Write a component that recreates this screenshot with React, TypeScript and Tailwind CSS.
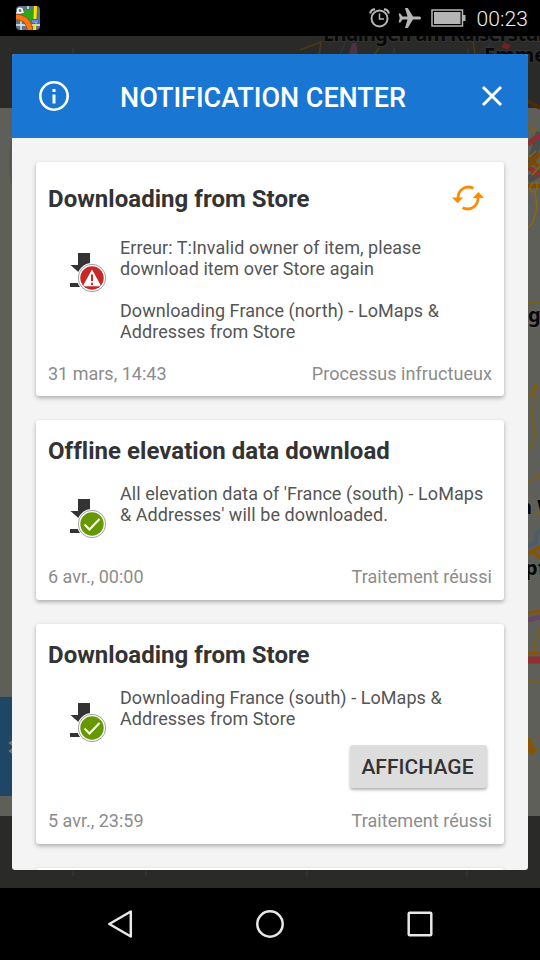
import React from 'react';
import clsx from 'clsx';

type Status = 'error' | 'done';

interface Notification {
  title: string;
  status: Status;
  paragraphs: string[][];
  date: string;
  result: string;
  retry?: boolean;
  action?: string;
  height: string;
}

const notifications: Notification[] = [
  {
    title: 'Downloading from Store',
    status: 'error',
    paragraphs: [
      ['Erreur: T:Invalid owner of item, please', 'download item over Store again'],
      ['Downloading France (north) - LoMaps &', 'Addresses from Store'],
    ],
    date: '31 mars, 14:43',
    result: 'Processus infructueux',
    retry: true,
    height: 'h-[234px]',
  },
  {
    title: 'Offline elevation data download',
    status: 'done',
    paragraphs: [["All elevation data of 'France (south) - LoMaps", "& Addresses' will be downloaded."]],
    date: '6 avr., 00:00',
    result: 'Traitement réussi',
    height: 'h-[180px]',
  },
  {
    title: 'Downloading from Store',
    status: 'done',
    paragraphs: [['Downloading France (south) - LoMaps &', 'Addresses from Store']],
    date: '5 avr., 23:59',
    result: 'Traitement réussi',
    action: 'AFFICHAGE',
    height: 'h-[220px]',
  },
];

function StatusBar() {
  return (
    <div className="h-9 shrink-0 bg-black flex items-center pl-4 pr-3">
      <svg width="24" height="24" viewBox="0 0 24 24" className="shrink-0">
        <clipPath id="app-icon">
          <rect width="24" height="24" rx="4" />
        </clipPath>
        <g clipPath="url(#app-icon)">
          <rect width="24" height="24" fill="#5d7387" />
          <path d="M5 6L10 4L18 3L19 15L16 18L12 12L6 9Z" fill="#2fa51c" />
          <path d="M0 7L8 6M0 19H24M5 12V24M12 0V3" stroke="#e6edf0" strokeWidth="1.4" />
          <path d="M19.500 0L18.500 24" stroke="#ffe100" strokeWidth="3" />
          <path d="M0 11C8 11 13 16 14 24" fill="none" stroke="#a94a08" strokeWidth="6" />
          <path d="M0 11C8 11 13 16 14 24" fill="none" stroke="#ff7413" strokeWidth="4.6" />
          <circle cx="4" cy="4.5" r="2.3" fill="#5d7387" stroke="#fff" strokeWidth="1.6" />
          <rect x="15.500" y="13" width="7" height="5" rx="1" fill="#2b62d9" />
          <path d="M17 14V17M19 14V17H21V14" stroke="#c9dcff" strokeWidth=".7" fill="none" />
        </g>
      </svg>
      <svg width="22" height="20" viewBox="0 0 22 20" className="ml-auto" fill="none" stroke="#b5b5b5">
        <circle cx="10.500" cy="10.500" r="8" strokeWidth="2" />
        <path d="M10.500 5.500V11H15" strokeWidth="1.500" />
        <path d="M1.200 5.500C1.500 3 3.500 1.200 6 1.300M19.800 5.500C19.500 3 17.500 1.200 15 1.300" strokeWidth="2.200" />
      </svg>
      <svg width="23" height="22" viewBox="0 0 23 22" className="ml-[7px]" fill="#b5b5b5">
        <path d="M23 11C23 9.900 22 9.400 21 9.400H15L9.800 1H7L9.500 9.400H4.500L2.300 6.500H.6L1.700 11L.6 15.500H2.300L4.500 12.600H9.500L7 21H9.800L15 12.600H21C22 12.600 23 12.100 23 11Z" />
      </svg>
      <svg width="35" height="18" viewBox="0 0 35 18" className="ml-[10px]">
        <rect x="1" y="1" width="30.500" height="16" fill="none" stroke="#b5b5b5" strokeWidth="1.500" />
        <rect x="3" y="3" width="26.500" height="12" fill="#b5b5b5" />
        <path d="M32 6H34.500V12H32Z" fill="#b5b5b5" />
      </svg>
      <span className="ml-[10px] pt-px text-[21px] leading-6 tracking-[0.1px] text-[#eeeeee] font-light">00:23</span>
    </div>
  );
}

function MapBackdrop() {
  return (
    <svg className="absolute inset-0" width="540" height="852" viewBox="0 36 540 852" fill="none">
      <rect y="36" width="540" height="852" fill="#2a2a28" />
      <rect y="108" width="540" height="708" fill="#5f5f59" />
      <path d="M12 140Q8 162 12 184" stroke="#555551" strokeWidth="2" />
      {/* dimmed roads behind the top toolbar */}
      <path d="M300 50L321 42L319 54M379 48L375 54M473 42L475 54" stroke="#4d3a12" strokeWidth="1.500" />
      <path d="M340 54L345 43M493 37L488 47L496 54" stroke="#29343c" strokeWidth="2" />
      <path d="M352 43L356 43L358 54H349Z" fill="#4a3348" />
      <path d="M504 42L511 45L508 50L501 47Z" fill="#6e2221" />
      <path d="M73 48V54M320 48V54M394 48V54M468 48V54M73 870V876M146 870V876M307 870V876M467 870V876" stroke="#3c3c3a" />
      <path d="M526 100L540 108" stroke="#4a2c05" strokeWidth="4" />
      {/* roads along the right edge */}
      <path d="M528 126L540 134" stroke="#80600c" strokeWidth="2" />
      <path d="M531 164L540 132M528 180L540 172" stroke="#4c4c4b" strokeWidth="8" />
      <path d="M528 145Q533 138 540 136M528 167L540 175" stroke="#8d3030" strokeWidth="5" />
      <path d="M528 167L540 153M529 157L540 169M528 186H540" stroke="#7c4b02" strokeWidth="4" />
      <path d="M529 157L536 151M532 175L540 166M533 182Q527 190 533 192Q538 191 537 182M535 192L537 207L533 222L528 228" stroke="#8c6710" strokeWidth="1.500" />
      <path d="M528 304Q533 301 540 302M528 397L533 390L535 384L540 389M535 384L534 400L532 420L535 432L533 443L528 449" stroke="#7c600b" strokeWidth="1.500" />
      <path d="M528 482L534 479L540 473M533 513H540" stroke="#7c600b" strokeWidth="1.500" />
      <path d="M528 546L535 543L536 535L540 530" stroke="#4b5c6a" strokeWidth="4" />
      <path d="M528 554L540 547M533 552L540 558" stroke="#875405" strokeWidth="3.500" />
      <path d="M528 620L540 617" stroke="#654666" strokeWidth="5" />
      <path d="M528 613L540 611M528 653H540" stroke="#875405" strokeWidth="3" />
      <path d="M535 652L534 641L538 637L538 630L540 628M528 680L540 683M534 750L540 749" stroke="#7c600b" strokeWidth="1.500" />
      <path d="M528 660H540" stroke="#8d3030" strokeWidth="7" />
      <path d="M528 738H531L534 746L536 750L532 756L528 752Z" fill="#875405" />
      <g fill="#080808" fontFamily="Noto Sans" fontWeight="700" stroke="#65655f" strokeWidth="2" paintOrder="stroke">
        <g stroke="#333331">
          <text x="323" y="41" fontSize="20" textLength="233">Endingen am Kaiserstuhl</text>
          <text x="484" y="62" fontSize="20">Emme</text>
        </g>
        <text x="528" y="322" fontSize="20">g</text>
        <text x="519" y="514" fontSize="20">n W</text>
        <text x="525" y="575" fontSize="20">pf</text>
      </g>
      <rect y="697" width="12" height="99" fill="#204666" />
      <path d="M14 740L10 743L14 746M14 748L10 751L14 754" stroke="#777" strokeWidth="2" />
    </svg>
  );
}

function StatusIcon({ status }: { status: Status }) {
  return (
    <svg width="36" height="40" viewBox="0 0 36 40" className="ml-[22px] mt-4 shrink-0">
      <path d="M8 0H20V12H24L14 24L0.500 12H8Z" fill="#333" />
      <path d="M0 30H27V34H0Z" fill="#333" />
      <circle cx="22" cy="25" r="15" fill="#fff" />
      <circle cx="22" cy="25" r="13.700" fill="#fff" stroke="#777" strokeWidth=".7" />
      <circle cx="22" cy="25" r="11.700" fill={status === 'error' ? '#c62828' : '#669900'} />
      {status === 'error' ? (
        <>
          <path d="M22 16.500L30.300 31.500V33.500H13.700V31.500Z" fill="#fff" />
          <path d="M14 33.600H30L28.500 35H15.500Z" fill="#c62828" />
          <path d="M22 21.500V28M22 29.800V32" stroke="#c62828" strokeWidth="2" />
        </>
      ) : (
        <path d="M14.500 25.500L19.500 30.500L29.500 20" fill="none" stroke="#fff" strokeWidth="2" />
      )}
    </svg>
  );
}

function RetryIcon() {
  return (
    <svg width="32" height="26" viewBox="0 0 32 26" className="mr-2" fill="none">
      <path d="M21.500 3.200C14 -.2 6 4.500 6 13M10.500 22.800C18 26.200 26 21.500 26 13" stroke="#ff8b00" strokeWidth="2.800" />
      <path d="M0 12.500H11.200L5.600 18.200ZM20.800 13H32L26.400 7Z" fill="#ff8b00" />
    </svg>
  );
}

function NotificationCard({ item }: { item: Notification }) {
  return (
    <div
      className={clsx(
        'shrink-0 flex flex-col bg-white rounded-[3px] px-3 pt-3 shadow-[0_2px_4px_rgba(0,0,0,0.3)]',
        item.retry ? 'pb-3' : 'pb-[13px]',
        item.height,
      )}
    >
      <div className={clsx('flex items-center justify-between', item.retry ? 'h-[49px] pb-px' : 'h-[37px] pb-0.5')}>
        <h2 className="pt-0.5 text-[24px] leading-7 font-bold tracking-[0.03px] text-[#333333]">{item.title}</h2>
        {item.retry && <RetryIcon />}
      </div>
      <div className="mt-[14px] flex text-[18px] leading-[21px] tracking-[0.05px] text-[#555555] whitespace-nowrap">
        <div className="w-[72px] shrink-0">
          <StatusIcon status={item.status} />
        </div>
        <div className="flex flex-col gap-[21px]">
          {item.paragraphs.map((lines) => (
            <p key={lines[0]}>
              {lines.map((line) => (
                <span key={line} className="block">
                  {line}
                </span>
              ))}
            </p>
          ))}
        </div>
      </div>
      <div className="mt-auto">
        {item.action && (
          <div className="flex justify-end pr-[5px] mb-[22px]">
            <button className="h-[43px] w-[137px] rounded-[3px] bg-[#dddddd] pt-0.5 pr-0.5 text-[21px] font-medium tracking-[0.05px] text-[#333333] shadow-[0_2px_3px_rgba(0,0,0,0.3)]">
              {item.action}
            </button>
          </div>
        )}
        <div className="flex justify-between text-[18px] leading-[21px] text-[#8c8c8c]">
          <span>{item.date}</span>
          <span className="tracking-[0.06px]">{item.result}</span>
        </div>
      </div>
    </div>
  );
}

function NavBar() {
  return (
    <div className="h-[72px] shrink-0 bg-black flex items-center justify-center gap-[118px]">
      <svg width="32" height="32" viewBox="0 0 32 32" fill="none" stroke="#e8e8e8" strokeWidth="2.500">
        <path d="M26.800 3.500V28.500L5.300 16Z" strokeLinejoin="round" />
      </svg>
      <svg width="32" height="32" viewBox="0 0 32 32" fill="none" stroke="#e8e8e8" strokeWidth="2.500">
        <circle cx="16" cy="16" r="12.700" />
      </svg>
      <svg width="32" height="32" viewBox="0 0 32 32" fill="none" stroke="#e8e8e8" strokeWidth="2.500">
        <rect x="4.700" y="4.700" width="22.600" height="22.600" rx="1" />
      </svg>
    </div>
  );
}

export default function App() {
  return (
    <div className="w-[540px] h-[960px] flex flex-col overflow-hidden bg-black font-[Roboto,sans-serif]">
      <StatusBar />

      <div className="relative flex-1 px-3 py-[18px]">
        <MapBackdrop />

        {/* Dialog */}
        <div className="relative h-[816px] flex flex-col rounded-[3px] overflow-hidden bg-[#f4f4f4]">
          <div className="h-[84px] shrink-0 flex items-center bg-[#1976d2] pl-[26px] pr-[25px]">
            <svg width="32" height="32" viewBox="0 0 32 32" fill="none" stroke="#fff">
              <circle cx="16" cy="16" r="13.700" strokeWidth="2.600" />
              <path d="M16 14.500V23.500M16 9V12" strokeWidth="3" />
            </svg>
            <h1 className="ml-[50px] pt-[3px] text-[27px] leading-8 font-medium tracking-[-0.03px] text-white whitespace-nowrap">
              NOTIFICATION CENTER
            </h1>
            <svg width="22" height="22" viewBox="0 0 22 22" className="ml-auto" fill="none" stroke="#fff">
              <path d="M2 2L20 20M20 2L2 20" strokeWidth="3" />
            </svg>
          </div>

          <div className="flex-1 min-h-0 overflow-hidden flex flex-col gap-6 p-6">
            {notifications.map((item) => (
              <NotificationCard key={item.date} item={item} />
            ))}
            <div className="h-12 shrink-0 rounded-[3px] bg-white shadow-[0_2px_4px_rgba(0,0,0,0.3)]" />
          </div>
        </div>
      </div>

      <NavBar />
    </div>
  );
}
